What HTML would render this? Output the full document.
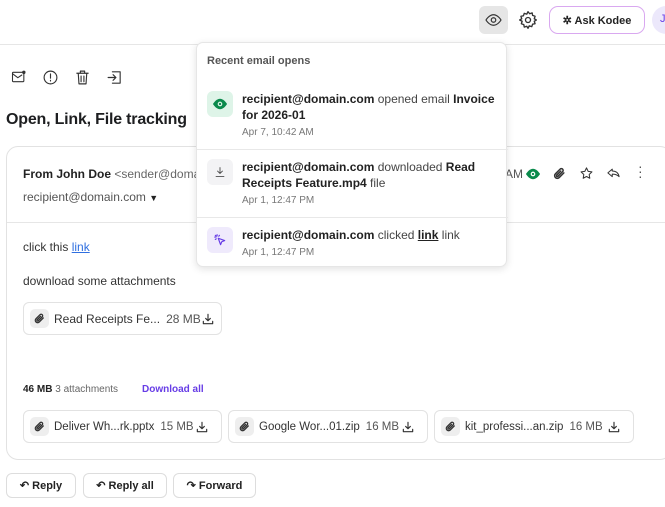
<!DOCTYPE html>
<html><head><style>
*{box-sizing:border-box;margin:0;padding:0}
body{width:665px;height:507px;overflow:hidden;background:#fff;font-family:"Liberation Sans",sans-serif;color:#222;position:relative;font-size:12px}
.a{position:absolute}
.topline{left:0;top:44px;width:665px;height:1px;background:#e6e6e6}
.ico{stroke:#333;fill:none;stroke-width:1.6;stroke-linecap:round;stroke-linejoin:round}
.card{left:6px;top:146px;width:666px;height:314px;border:1px solid #e2e2e2;border-radius:12px}
.att{position:absolute;height:33px;border:1px solid #e2e2e2;border-radius:6px;display:flex;align-items:center;font-size:12px;color:#333;padding-left:6px;white-space:nowrap;overflow:hidden}
.clip{width:19px;height:19px;background:#eee;border-radius:5px;margin-right:5px;display:flex;align-items:center;justify-content:center;flex:none}
.sz{color:#555;margin-left:6px}
.dl{margin-left:auto;margin-right:12px;flex:none}
.btn{position:absolute;top:473px;height:25px;border:1px solid #ddd;border-radius:6px;font-weight:bold;font-size:11px;display:flex;align-items:center;justify-content:center;gap:8px;color:#222}
.pop{left:196px;top:42px;width:311px;height:225px;background:#fff;border:1px solid #e6e6e6;border-radius:7px;box-shadow:0 2px 8px rgba(0,0,0,.12)}
.row{position:absolute;left:0;width:311px}
.ri{position:absolute;left:10px;width:26px;height:26px;border-radius:6px;display:flex;align-items:center;justify-content:center}
.rt{position:absolute;left:45px;width:260px;font-size:12px;line-height:16px;color:#444}
.rt b{color:#222}
.tm{font-size:10px;color:#777;margin-top:3px;line-height:13px}
.sep{position:absolute;left:0;width:311px;height:1px;background:#e8e8e8}
</style></head><body>
<svg width="0" height="0" style="position:absolute"><defs>
<symbol id="clip" viewBox="0 0 24 24"><path fill="none" stroke="#333" stroke-width="2.4" stroke-linecap="round" d="M19 11l-7.5 7.5a4.2 4.2 0 01-6-6L13 5a2.8 2.8 0 014 4l-7.5 7.5a1.4 1.4 0 01-2-2L14 8"/></symbol>
<symbol id="dl" viewBox="0 0 24 24"><path fill="none" stroke="#333" stroke-width="2" stroke-linecap="round" stroke-linejoin="round" d="M12 4v11M8 11l4 4 4-4M4 16v4h16v-4"/></symbol>
</defs></svg>
<div class="a topline"></div>
<div class="a" style="left:479px;top:6px;width:29px;height:28px;background:#e6e6e6;border-radius:6px"></div>
<svg class="a" style="left:484px;top:11px" width="19" height="18" viewBox="0 0 24 24"><path class="ico" stroke-width="2" d="M2 12s4-7 10-7 10 7 10 7-4 7-10 7S2 12 2 12z"/><circle class="ico" stroke-width="2" cx="12" cy="12" r="3"/></svg>
<svg class="a" style="left:518px;top:10px" width="20" height="20" viewBox="0 0 24 24"><circle class="ico" stroke-width="2" cx="12" cy="12" r="3"/><path class="ico" stroke-width="2" d="M12 2l2 2.5 3-1 .5 3 3 1-1 3L22 12l-2.5 1.5 1 3-3 .5-1 3-3-1L12 22l-1.5-2.5-3 1-.5-3-3-1 1-3L2 12l2.5-1.5-1-3 3-.5 1-3 3 1z"/></svg>
<div class="a" style="left:549px;top:6px;width:96px;height:28px;border-radius:9px;border:1.5px solid #d9a8f0;background:#fff;display:flex;align-items:center;justify-content:center;gap:6px;font-weight:bold;font-size:11px">✲ Ask Kodee</div>
<div class="a" style="left:652px;top:6px;width:28px;height:28px;border-radius:50%;background:#ece8fb;color:#673de6;font-size:11px;padding:7px 0 0 8px">J</div>
<svg class="a" style="left:10px;top:69px" width="17" height="16" viewBox="0 0 24 24"><rect class="ico" stroke-width="2.2" x="3" y="5" width="17" height="14" rx="1"/><path class="ico" stroke-width="2.2" d="M3 7l8 6 6-4"/><circle fill="#333" cx="20" cy="5" r="2.5"/></svg>
<svg class="a" style="left:42px;top:69px" width="17" height="17" viewBox="0 0 24 24"><circle class="ico" stroke-width="2.2" cx="12" cy="12" r="9"/><path class="ico" stroke-width="2.2" d="M12 7v6M12 16v1"/></svg>
<svg class="a" style="left:74px;top:69px" width="17" height="17" viewBox="0 0 24 24"><path class="ico" stroke-width="2.2" d="M4 6h16M9 6V3h6v3M6 6l1 15h10l1-15M10 10v8M14 10v8"/></svg>
<svg class="a" style="left:106px;top:69px" width="17" height="17" viewBox="0 0 24 24"><path class="ico" stroke-width="2.2" d="M9 4h11v16H9M3 12h11M10 8l4 4-4 4"/></svg>
<div class="a" style="left:6px;top:111px;font-size:16px;font-weight:bold;color:#1d1e20;letter-spacing:-0.2px">Open, Link, File tracking</div>
<div class="a card"></div>
<div class="a" style="left:23px;top:167px;font-size:12px"><b>From John Doe</b> <span style="color:#666">&lt;sender@domain.com&gt;</span></div>
<div class="a" style="left:23px;top:190px;font-size:12px;color:#555">recipient@domain.com <span style="color:#222;font-size:9px">▼</span></div>
<div class="a" style="left:505px;top:167px;color:#555">AM</div>
<svg class="a" style="left:526px;top:168px" width="14" height="12" viewBox="0 0 24 20"><path fill="#0a8a4c" d="M0 10s5-9 12-9 12 9 12 9-5 9-12 9S0 10 0 10z"/><circle fill="#fff" cx="12" cy="10" r="4"/><circle fill="#0a8a4c" cx="12" cy="10" r="2"/></svg>
<svg class="a" style="left:552px;top:166px" width="15" height="15"><use href="#clip"/></svg>
<svg class="a" style="left:579px;top:166px" width="15" height="15" viewBox="0 0 24 24"><path class="ico" stroke-width="2" d="M12 3l2.7 5.6 6 .8-4.4 4.2 1 6L12 16.8 6.7 19.6l1-6L3.3 9.4l6-.8z"/></svg>
<svg class="a" style="left:606px;top:166px" width="15" height="15" viewBox="0 0 24 24"><path class="ico" stroke-width="2" d="M10 5L3 11l7 6v-4c5 0 8 1 11 4-1-5-4-9-11-9z"/></svg>
<div class="a" style="left:638px;top:164px;color:#555;font-size:14px;line-height:5px;width:4px;text-align:center">·<br>·<br>·</div>
<div class="a" style="left:7px;top:222px;width:665px;height:1px;background:#e6e6e6"></div>
<div class="a" style="left:23px;top:240px;color:#333">click this <span style="color:#2f6fe0;text-decoration:underline">link</span></div>
<div class="a" style="left:23px;top:274px;color:#333">download some attachments</div>
<div class="att" style="left:23px;top:302px;width:199px"><div class="clip"><svg width="13" height="13"><use href="#clip"/></svg></div>Read Receipts Fe...<span class="sz">28 MB</span><svg class="dl" width="14" height="14"><use href="#dl"/></svg></div>
<div class="a" style="left:23px;top:384px;font-size:10px"><b>46 MB</b> <span style="color:#666">3 attachments</span></div>
<div class="a" style="left:142px;top:384px;font-size:10px;font-weight:bold;color:#673de6">Download all</div>
<div class="att" style="left:23px;top:410px;width:199px;font-size:11.5px"><div class="clip"><svg width="13" height="13"><use href="#clip"/></svg></div>Deliver Wh...rk.pptx<span class="sz">15 MB</span><svg class="dl" width="14" height="14"><use href="#dl"/></svg></div>
<div class="att" style="left:228px;top:410px;width:200px;font-size:11.5px"><div class="clip"><svg width="13" height="13"><use href="#clip"/></svg></div>Google Wor...01.zip<span class="sz">16 MB</span><svg class="dl" width="14" height="14"><use href="#dl"/></svg></div>
<div class="att" style="left:434px;top:410px;width:200px;font-size:11.5px"><div class="clip"><svg width="13" height="13"><use href="#clip"/></svg></div>kit_professi...an.zip<span class="sz">16 MB</span><svg class="dl" width="14" height="14"><use href="#dl"/></svg></div>
<div class="btn" style="left:6px;width:70px">↶ Reply</div>
<div class="btn" style="left:83px;width:84px">↶ Reply all</div>
<div class="btn" style="left:173px;width:83px">↷ Forward</div>
<div class="a pop">
<div class="a" style="left:10px;top:12px;font-size:11px;font-weight:bold;color:#555">Recent email opens</div>
<div class="row" style="top:48px">
 <div class="ri" style="background:#def4e8"><svg width="14" height="12" viewBox="0 0 24 20"><path fill="#0a8a4c" d="M0 10s5-9 12-9 12 9 12 9-5 9-12 9S0 10 0 10z"/><circle fill="#def4e8" cx="12" cy="10" r="4"/><circle fill="#0a8a4c" cx="12" cy="10" r="2"/></svg></div>
 <div class="rt" style="top:0"><b>recipient@domain.com</b> opened email <b>Invoice for 2026-01</b><div class="tm">Apr 7, 10:42 AM</div></div>
</div>
<div class="sep" style="top:106px"></div>
<div class="row" style="top:116px">
 <div class="ri" style="background:#f3f3f5"><svg width="12" height="12" viewBox="0 0 24 24"><path class="ico" stroke-width="2.5" d="M12 3v12M7 10l5 5 5-5M4 21h16"/></svg></div>
 <div class="rt" style="top:0"><b>recipient@domain.com</b> downloaded <b>Read Receipts Feature.mp4</b> file<div class="tm">Apr 1, 12:47 PM</div></div>
</div>
<div class="sep" style="top:174px"></div>
<div class="row" style="top:184px">
 <div class="ri" style="background:#efeafc"><svg width="14" height="14" viewBox="0 0 24 24"><path fill="none" stroke="#673de6" stroke-width="2" stroke-linejoin="round" d="M9 9l11 4-5 2-2 5z"/><path stroke="#673de6" stroke-width="2" stroke-linecap="round" d="M7 3v2M3 7h2M4 4l1.5 1.5M11 4l-1 1.5M4 11l1.5-1"/></svg></div>
 <div class="rt" style="top:0"><b>recipient@domain.com</b> clicked <b style="text-decoration:underline">link</b> link<div class="tm">Apr 1, 12:47 PM</div></div>
</div>
</div>
</body></html>
